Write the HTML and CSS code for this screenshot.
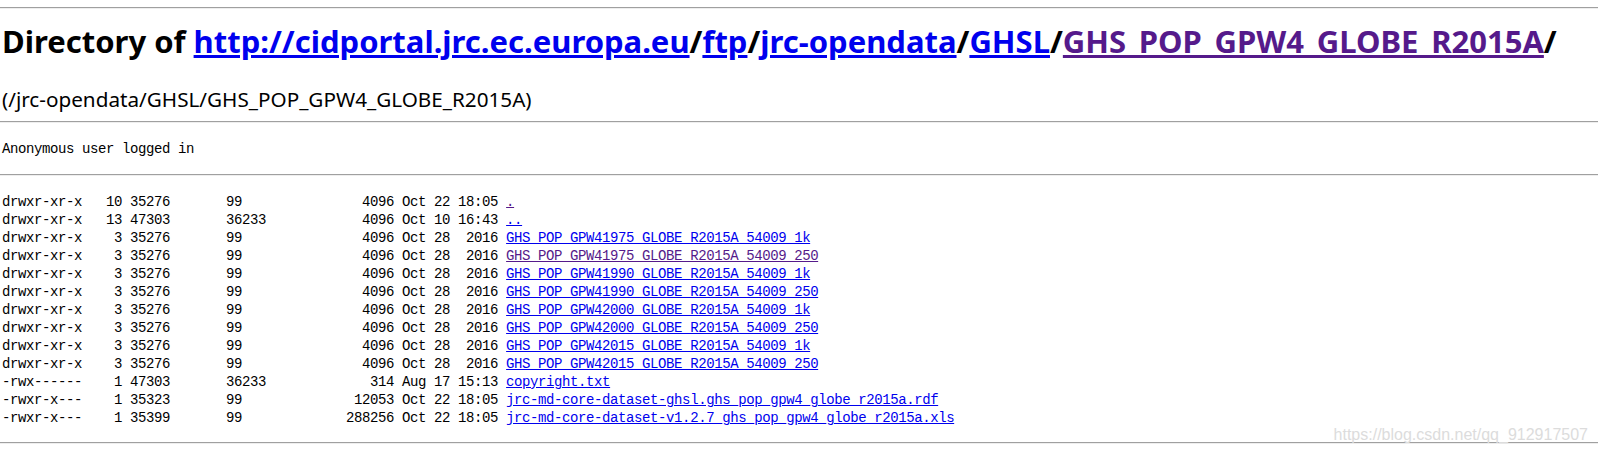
FILE: index.html
```html
<!DOCTYPE html>
<html>
<head>
<meta charset="utf-8">
<title>Directory of http://cidportal.jrc.ec.europa.eu/ftp/jrc-opendata/GHSL/GHS_POP_GPW4_GLOBE_R2015A/</title>
<link rel="stylesheet" href="styles.css">
</head>
<body>
<hr class="rule rule-top">
<h1 class="title">Directory of <a class="lnk" href="#">http://cidportal.jrc.ec.europa.eu</a>/<a class="lnk" href="#">ftp</a>/<a class="lnk" href="#">jrc-opendata</a>/<a class="lnk" href="#">GHSL</a>/<a class="lnk visited" href="#">GHS_POP_GPW4_GLOBE_R2015A</a>/</h1>
<p class="path">(/jrc-opendata/GHSL/GHS_POP_GPW4_GLOBE_R2015A)</p>
<hr class="rule rule-mid">
<pre class="login">Anonymous user logged in</pre>
<hr class="rule rule-list">
<pre class="listing">drwxr-xr-x   10 35276       99               4096 Oct 22 18:05 <a class="lnk visited" href="#">.</a>
drwxr-xr-x   13 47303       36233            4096 Oct 10 16:43 <a class="lnk" href="#">..</a>
drwxr-xr-x    3 35276       99               4096 Oct 28  2016 <a class="lnk" href="#">GHS_POP_GPW41975_GLOBE_R2015A_54009_1k</a>
drwxr-xr-x    3 35276       99               4096 Oct 28  2016 <a class="lnk visited" href="#">GHS_POP_GPW41975_GLOBE_R2015A_54009_250</a>
drwxr-xr-x    3 35276       99               4096 Oct 28  2016 <a class="lnk" href="#">GHS_POP_GPW41990_GLOBE_R2015A_54009_1k</a>
drwxr-xr-x    3 35276       99               4096 Oct 28  2016 <a class="lnk" href="#">GHS_POP_GPW41990_GLOBE_R2015A_54009_250</a>
drwxr-xr-x    3 35276       99               4096 Oct 28  2016 <a class="lnk" href="#">GHS_POP_GPW42000_GLOBE_R2015A_54009_1k</a>
drwxr-xr-x    3 35276       99               4096 Oct 28  2016 <a class="lnk" href="#">GHS_POP_GPW42000_GLOBE_R2015A_54009_250</a>
drwxr-xr-x    3 35276       99               4096 Oct 28  2016 <a class="lnk" href="#">GHS_POP_GPW42015_GLOBE_R2015A_54009_1k</a>
drwxr-xr-x    3 35276       99               4096 Oct 28  2016 <a class="lnk" href="#">GHS_POP_GPW42015_GLOBE_R2015A_54009_250</a>
-rwx------    1 47303       36233             314 Aug 17 15:13 <a class="lnk" href="#">copyright.txt</a>
-rwxr-x---    1 35323       99              12053 Oct 22 18:05 <a class="lnk" href="#">jrc-md-core-dataset-ghsl.ghs_pop_gpw4_globe_r2015a.rdf</a>
-rwxr-x---    1 35399       99             288256 Oct 22 18:05 <a class="lnk" href="#">jrc-md-core-dataset-v1.2.7_ghs_pop_gpw4_globe_r2015a.xls</a></pre>
<hr class="rule rule-bottom">
<div class="watermark">https://blog.csdn.net/qq_912917507</div>
</body>
</html>
```

FILE: styles.css
```css
html, body {
  margin: 0;
  padding: 0;
  background: #ffffff;
  color: #000000;
}

body {
  position: relative;
  width: 1598px;
  height: 453px;
  overflow: hidden;
  font-family: "Noto Sans", "Open Sans", sans-serif;
}

.rule {
  display: block;
  height: 0;
  margin: 0;
  border: 0;
  border-top: 1px solid #a0a0a0;
  border-bottom: 1px solid #eeeeee;
}

.rule-top { margin-top: 7px; }

.title {
  margin: 12px 0 0 2px;
  font-size: 31px;
  line-height: 40px;
  font-weight: 700;
  white-space: nowrap;
}

.lnk { color: #0000ee; text-decoration: underline; }
.lnk.visited { color: #551a8b; }

.path {
  margin: 25px 0 0 2px;
  font-size: 20.7px;
  line-height: 26px;
}

.rule-mid { margin-top: 9px; }

.login,
.listing {
  margin: 0 0 0 2px;
  font-family: "Liberation Mono", "DejaVu Sans Mono", monospace;
  font-size: 14px;
  letter-spacing: -0.4px;
  line-height: 18px;
}

.login { margin-top: 17px; }

.rule-list { margin-top: 16px; }

.listing { margin-top: 17px; }

.rule-bottom { margin-top: 15px; }

.watermark {
  position: absolute;
  right: 10px;
  bottom: 9px;
  font-family: "Liberation Sans", Arial, sans-serif;
  font-size: 16px;
  line-height: 18px;
  color: #dcdcdc;
}
```
